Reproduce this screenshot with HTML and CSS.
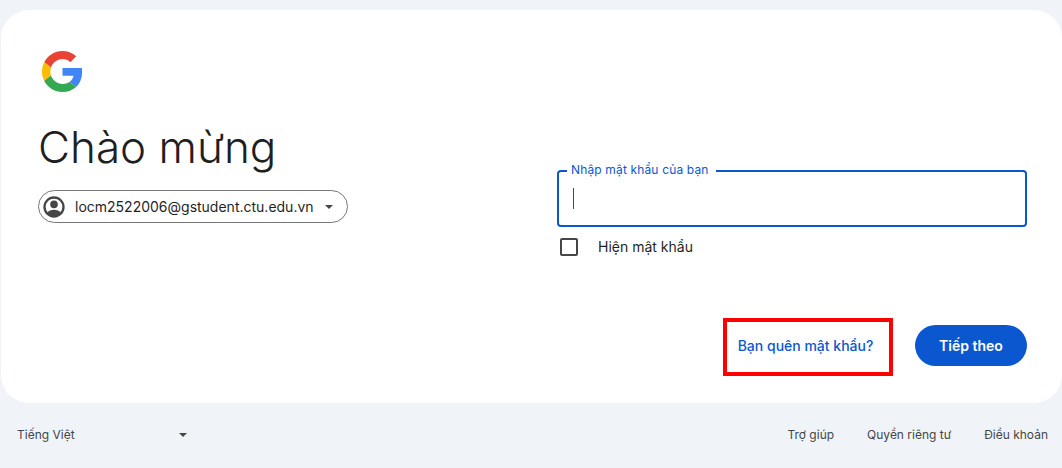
FILE: index.html
```html
<!DOCTYPE html>
<html lang="vi">
<head>
<meta charset="utf-8">
<title>Đăng nhập</title>
<link rel="stylesheet" href="styles.css">
</head>
<body>
<main class="card">
  <div class="columns">
    <section class="intro">
      <svg class="logo" viewBox="0 0 48 48" aria-hidden="true">
        <path fill="#EA4335" d="M24 9.5c3.54 0 6.71 1.22 9.21 3.6l6.85-6.85C35.9 2.38 30.47 0 24 0 14.62 0 6.51 5.38 2.56 13.22l7.98 6.19C12.43 13.72 17.74 9.5 24 9.5z"/>
        <path fill="#4285F4" d="M46.98 24.55c0-1.57-.15-3.09-.38-4.55H24v9.02h12.94c-.58 2.96-2.26 5.48-4.78 7.18l7.73 6c4.51-4.18 7.09-10.36 7.09-17.65z"/>
        <path fill="#FBBC05" d="M10.53 28.59c-.48-1.45-.76-2.99-.76-4.59s.27-3.14.76-4.59l-7.98-6.19C.92 16.46 0 20.12 0 24c0 3.88.92 7.54 2.56 10.78l7.97-6.19z"/>
        <path fill="#34A853" d="M24 48c6.48 0 11.93-2.13 15.89-5.81l-7.73-6c-2.15 1.45-4.92 2.3-8.16 2.3-6.26 0-11.57-4.22-13.47-9.91l-7.98 6.19C6.51 42.62 14.62 48 24 48z"/>
      </svg>
      <h1 class="title">Chào mừng</h1>
      <div class="chip">
        <svg class="avatar" viewBox="0 0 24 24" aria-hidden="true">
          <circle cx="12" cy="12" r="9.500" fill="none" stroke="#444746" stroke-width="2.300"/>
          <circle fill="#444746" cx="12" cy="9.400" r="3.800"/>
          <path fill="#444746" d="M5 18c1.500-2 4.300-3.200 7-3.200s5.500 1.200 7 3.200a9.500 9.500 0 0 1-7 3.200A9.500 9.500 0 0 1 5 18z"/>
        </svg>
        <span class="email">locm2522006@gstudent.ctu.edu.vn</span>
        <span class="caret chip-caret"></span>
      </div>
    </section>
    <section class="form">
      <div class="field">
        <span class="field-label">Nhập mật khẩu của bạn</span>
        <span class="cursor"></span>
      </div>
      <label class="show">
        <span class="box"></span>
        <span class="show-text">Hiện mật khẩu</span>
      </label>
    </section>
  </div>
  <div class="actions">
    <a class="forgot" href="#">Bạn quên mật khẩu?</a>
    <button class="next" type="button">Tiếp theo</button>
  </div>
</main>
<footer class="footer">
  <div class="lang">
    <span>Tiếng Việt</span>
    <span class="caret"></span>
  </div>
  <nav class="links">
    <a href="#">Trợ giúp</a>
    <a href="#">Quyền riêng tư</a>
    <a href="#">Điều khoản</a>
  </nav>
</footer>
</body>
</html>
```
FILE: styles.css
```css
* { box-sizing: border-box; }
html, body { margin: 0; height: 100%; }
body {
  background: #f0f4f9;
  font-family: Inter, Roboto, sans-serif;
  color: #1f1f1f;
  padding: 10px 0 0 1px;
  overflow: hidden;
}
.card {
  background: #fff;
  border-radius: 28px;
  height: 393px;
  padding: 41px 35px 0 37px;
  display: flex;
  flex-direction: column;
}
.columns {
  display: grid;
  grid-template-columns: 519px 470px;
  height: 267px;
}
.logo { display: block; width: 41px; height: 41px; margin-left: 4px; }
.title {
  margin: 29px 0 0 0;
  font-size: 44px;
  line-height: 52px;
  font-weight: 300;
}
.chip {
  margin-top: 17px;
  width: 310px;
  height: 33px;
  border: 1px solid #747775;
  border-radius: 17px;
  display: flex;
  align-items: center;
  padding: 0 14px 0 3px;
  font-size: 14px;
  color: #1f1f1f;
}
.avatar { width: 24px; height: 24px; flex: none; }
.email { margin-left: 9px; white-space: nowrap; }
.caret {
  width: 0; height: 0;
  border-left: 4px solid transparent;
  border-right: 4px solid transparent;
  border-top: 4px solid #444746;
}
.chip-caret { margin-left: auto; }
.form { padding-top: 119px; }
.field {
  position: relative;
  height: 57px;
  border: 2px solid #0b57d0;
  border-radius: 4px;
  display: flex;
  align-items: center;
  padding-left: 14px;
}
.field-label {
  position: absolute;
  left: 8px;
  top: -10px;
  padding: 0 7px 0 4px;
  background: #fff;
  color: #0b57d0;
  font-size: 12px;
  line-height: 16px;
  letter-spacing: .15px;
}
.cursor { width: 1px; height: 21px; background: #444746; }
.show {
  margin-top: 11px;
  display: flex;
  align-items: center;
  font-size: 14px;
  padding-left: 3px;
}
.show-text { margin-top: -2px; }
.box {
  width: 18px;
  height: 18px;
  border: 2px solid #444746;
  border-radius: 2px;
  margin-right: 20px;
}
.actions {
  display: flex;
  justify-content: flex-end;
  align-items: flex-start;
  gap: 22px;
}
.forgot {
  width: 170px;
  height: 58px;
  border: 4px solid #f00;
  display: flex;
  align-items: center;
  justify-content: center;
  padding: 0 5px 4px 0;
  color: #0b57d0;
  text-decoration: none;
  font-size: 14px;
  font-weight: 500;
}
.next {
  margin-top: 7px;
  width: 112px;
  height: 41px;
  border: 0;
  border-radius: 21px;
  background: #0b57d0;
  color: #fff;
  font: 600 14px Inter, Roboto, sans-serif;
}
.footer {
  display: flex;
  justify-content: space-between;
  align-items: center;
  height: 65px;
  padding: 0 14px 2px 16px;
  font-size: 12px;
  color: #444746;
}
.lang {
  width: 170px;
  display: flex;
  justify-content: space-between;
  align-items: center;
}
.links { display: flex; gap: 33px; }
.links a { color: #444746; text-decoration: none; }
```
